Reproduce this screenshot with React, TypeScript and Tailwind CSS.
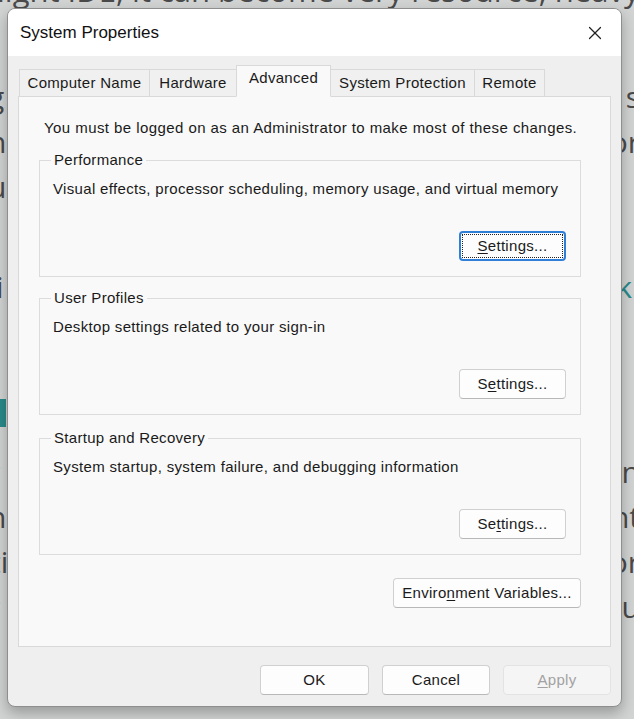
import { X } from "lucide-react";

type BtnProps = {
  label: React.ReactNode;
  w: string;
  focused?: boolean;
  disabled?: boolean;
};

function Btn({ label, w, focused, disabled }: BtnProps) {
  if (focused) {
    return (
      <div className={`${w} h-[30px] rounded-[4px] border-2 border-[#2f7fd6] bg-[#fdfdfd] p-[1px]`}>
        <div className="h-full w-full border border-dotted border-[#222] flex items-center justify-center text-[15px] tracking-[0.3px] text-[#1a1a1a]">
          {label}
        </div>
      </div>
    );
  }
  return (
    <div
      className={`${w} h-[30px] rounded-[4px] border flex items-center justify-center text-[15px] tracking-[0.3px] ${
        disabled
          ? "border-[#e3e3e3] bg-[#f5f5f5] text-[#a2a2a2]"
          : "border-[#d0d0d0] border-b-[#b8b8b8] bg-[#fdfdfd] text-[#1a1a1a]"
      }`}
    >
      {label}
    </div>
  );
}

function Group({
  title,
  text,
  button,
  className = "",
}: {
  title: string;
  text: string;
  button: React.ReactNode;
  className?: string;
}) {
  return (
    <div className={`relative w-[542px] h-[117px] border border-[#dcdcdc] flex flex-col pl-[13px] pr-[14px] pt-[17px] pb-[15px] ${className}`}>
      <span className="absolute left-[11px] -top-[11px] bg-[#f9f9f9] px-[3px] text-[15px] tracking-[0.3px] leading-[20px] text-[#1a1a1a]">
        {title}
      </span>
      <p className="text-[15px] tracking-[0.33px] leading-[22px] text-[#1a1a1a]">{text}</p>
      <div className="mt-auto flex justify-end">{button}</div>
    </div>
  );
}

const settings = (i: number) => {
  const s = "Settings...";
  return (
    <span>
      {s.slice(0, i)}
      <span className="underline underline-offset-2">{s[i]}</span>
      {s.slice(i + 1)}
    </span>
  );
};

function Tab({ label, active, w }: { label: string; active?: boolean; w: string }) {
  return (
    <div
      className={`${w} flex items-center justify-center border border-[#d9d9d9] -ml-px first:ml-0 text-[15px] tracking-[0.3px] text-[#1a1a1a] ${
        active
          ? "relative z-10 h-[32px] bg-[#f9f9f9] border-b-[#f9f9f9] pb-[6px]"
          : "h-[28px] bg-[#f0f0f0]"
      }`}
    >
      {label}
    </div>
  );
}

export default function App() {
  return (
    <div className="relative w-[634px] h-[719px] overflow-hidden bg-[#d2d4d4] font-['Liberation_Sans',Arial,sans-serif]">
      {/* page behind the dialog */}
      <div className="font-['Open_Sans',sans-serif] text-[30px] text-[#4a4a4a]">
        <div className="-mt-[33px] h-[45px] whitespace-nowrap -ml-[3px] text-[31px]">
          light IDE, it can become very resource, heavy
        </div>
        <div className="h-[62px]" />
        <div className="flex justify-between h-[45px] items-center">
          <span className="-ml-[12px]">g</span>
          <span className="-mr-[6px]">s</span>
        </div>
        <div className="flex justify-between h-[45px] items-center">
          <span className="-ml-[12px]">n</span>
          <span className="-mr-[6px]">or</span>
        </div>
        <div className="flex justify-between h-[45px] items-center">
          <span className="-ml-[12px]">u,</span>
          <span />
        </div>
        <div className="h-[55px]" />
        <div className="flex justify-between h-[45px] items-center">
          <span className="-ml-[4px]">i</span>
          <span className="-mr-[6px]">
            <span className="text-[#2a8a8a]">k</span>.
          </span>
        </div>
        <div className="h-[90px]" />
        <div className="h-[28px] w-[20px] -ml-[14px] bg-[#2a8a8a]" />
        <div className="h-[22px]" />
        <div className="flex justify-between h-[45px] items-center">
          <span className="-ml-[12px]">r</span>
          <span className="-mr-[6px]">n</span>
        </div>
        <div className="flex justify-between h-[45px] items-center">
          <span className="-ml-[12px]">n</span>
          <span className="-mr-[6px]">nt</span>
        </div>
        <div className="flex justify-between h-[45px] items-center">
          <span className="-ml-[10px]">ti</span>
          <span className="-mr-[6px]">or</span>
        </div>
        <div className="flex justify-between h-[45px] items-center">
          <span className="-ml-[12px]">r</span>
          <span className="-mr-[6px]">u</span>
        </div>
      </div>

      {/* dialog */}
      <div className="absolute left-[7px] top-[8px] w-[615px] h-[699px] rounded-[8px] border border-[#8e8e8e] bg-[#efefef] shadow-[0_6px_14px_rgba(0,0,0,0.28)] overflow-hidden flex flex-col">
        <div className="h-[47px] shrink-0 bg-white flex items-center justify-between pl-[12px] pr-[15px]">
          <span className="text-[17px] text-[#111]">System Properties</span>
          <X size={22} strokeWidth={1.3} className="text-[#222]" />
        </div>

        <div className="flex flex-col px-[10px] pt-[9px]">
          <div className="flex items-end pl-[1px] h-[32px]">
            <Tab w="w-[131px]" label="Computer Name" />
            <Tab w="w-[88px]" label="Hardware" />
            <Tab w="w-[95px]" label="Advanced" active />
            <Tab w="w-[145px]" label="System Protection" />
            <Tab w="w-[71px]" label="Remote" />
          </div>
          <div className="-mt-px h-[551px] border border-[#d9d9d9] bg-[#f9f9f9] pl-[20px] pt-[20px] flex flex-col">
            <p className="pl-[5px] text-[15px] tracking-[0.43px] leading-[22px] text-[#1a1a1a]">
              You must be logged on as an Administrator to make most of these changes.
            </p>
            <div className="mt-[21px] flex flex-col">
              <Group
                title="Performance"
                text="Visual effects, processor scheduling, memory usage, and virtual memory"
                button={<Btn w="w-[107px]" focused label={settings(0)} />}
              />
              <Group
                className="mt-[21px]"
                title="User Profiles"
                text="Desktop settings related to your sign-in"
                button={<Btn w="w-[107px]" label={settings(1)} />}
              />
              <Group
                className="mt-[23px]"
                title="Startup and Recovery"
                text="System startup, system failure, and debugging information"
                button={<Btn w="w-[107px]" label={settings(2)} />}
              />
            </div>
            <div className="mt-[23px] w-[542px] flex justify-end">
              <Btn
                w="w-[188px]"
                label={
                  <span>
                    Enviro<span className="underline underline-offset-2">n</span>ment Variables...
                  </span>
                }
              />
            </div>
          </div>
          <div className="mt-[18px] flex justify-end gap-[13px]">
            <Btn w="w-[109px]" label="OK" />
            <Btn w="w-[108px]" label="Cancel" />
            <Btn
              w="w-[108px]"
              disabled
              label={
                <span>
                  <span className="underline underline-offset-2">A</span>pply
                </span>
              }
            />
          </div>
        </div>
      </div>
    </div>
  );
}
